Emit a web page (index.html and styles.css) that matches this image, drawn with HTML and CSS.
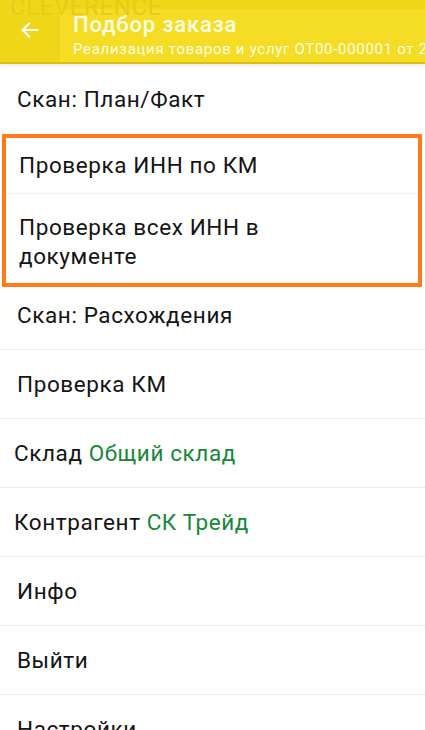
FILE: index.html
```html
<!DOCTYPE html>
<html lang="ru">
<head>
<meta charset="utf-8">
<link rel="stylesheet" href="styles.css">
</head>
<body>
<div class="screen">
  <header class="appbar">
    <span class="watermark">CLEVERENCE</span>
    <button class="back" aria-label="Назад">
      <svg width="22" height="22" viewBox="0 0 24 24"><path d="M20 12H5M11 5l-7 7 7 7" fill="none" stroke="#fff" stroke-width="2.4" stroke-linecap="square"/></svg>
    </button>
    <div class="titles">
      <div class="title">Подбор заказа</div>
      <div class="subtitle">Реализация товаров и услуг ОТ00-000001 от 27.05.2020</div>
    </div>
  </header>
  <ul class="menu">
    <li class="row r1">Скан: План/Факт</li>
    <li class="box">
      <ul class="menu">
        <li class="row r2">Проверка ИНН по КМ</li>
        <li class="row r3">Проверка всех ИНН в<br>документе</li>
      </ul>
    </li>
    <li class="row r4">Скан: Расхождения</li>
    <li class="row">Проверка КМ</li>
    <li class="row field">Склад <span class="val">Общий склад</span></li>
    <li class="row field">Контрагент <span class="val">СК Трейд</span></li>
    <li class="row">Инфо</li>
    <li class="row">Выйти</li>
    <li class="row">Настройки</li>
  </ul>
</div>
</body>
</html>
```
FILE: styles.css
```css
* { box-sizing: border-box; }
html, body { margin: 0; padding: 0; background: #fff; }
body { font-family: Roboto, "Noto Sans", sans-serif; color: #141414; overflow: hidden; }
.screen { width: 425px; height: 730px; overflow: hidden; }
.appbar {
  position: relative;
  height: 64px;
  background: #f0d619;
  border-bottom: 2px solid #dcc010;
  box-shadow: 0 2px 3px rgba(0,0,0,0.08);
  display: flex;
  align-items: stretch;
  overflow: hidden;
}
.watermark {
  position: absolute;
  left: 10px; top: -7px;
  font-size: 24px;
  color: #e6cc1a;
  letter-spacing: 0.6px;
}
.back {
  width: 60px; border: 0; background: transparent; padding: 0;
  display: flex; align-items: center; justify-content: center;
  padding-bottom: 2px;
}
.titles {
  flex: 1;
  margin-top: 9px;
  padding-left: 13px;
  background: #f4dd24;
  white-space: nowrap;
  overflow: hidden;
  color: #fffce6;
}
.title { font-size: 22px; font-weight: 500; letter-spacing: 0.8px; line-height: 26px; margin-top: 3px; }
.subtitle { font-size: 15px; letter-spacing: 0.7px; line-height: 18px; margin-top: 2px; }
.menu { list-style: none; margin: 0; padding: 0; }
.row {
  font-size: 22.5px;
  letter-spacing: 0.6px;
  line-height: 29px;
  padding: 0 17px;
  height: 69px;
  display: flex; align-items: center;
  border-bottom: 1.5px solid #ececec;
}
.r1 { height: 70px; border-bottom: 0; }
.box {
  margin: 0 3px 0 2px;
  border: 4px solid #ff7b1c;
  height: 153px;
}
.box .row { padding-left: 13px; }
.r2 { height: 56px; border-bottom: 1.5px solid #f0f0f0; }
.r3 { height: 89px; border-bottom: 0; display: block; padding-top: 19px; }
.r4 { height: 63px; padding-bottom: 6px; }
.field { padding-left: 14px; }
.val { color: #17873a; margin-left: 6px; }
```
